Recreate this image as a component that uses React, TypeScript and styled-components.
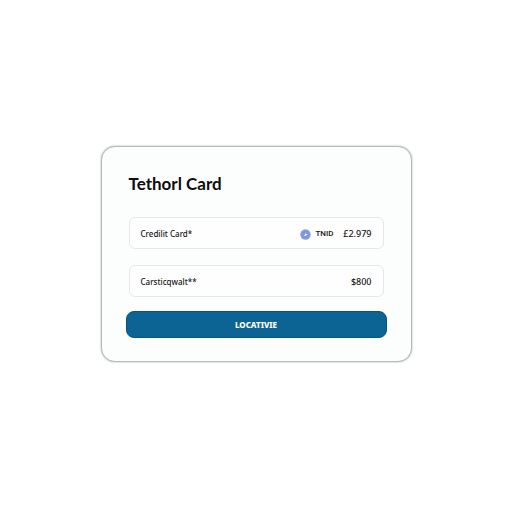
import React, { useState } from "react";
import styled, { createGlobalStyle } from "styled-components";

const GlobalStyle = createGlobalStyle`
  *, *::before, *::after { box-sizing: border-box; }
  body {
    margin: 0;
    background: #fff;
    color: #161719;
    font-family: "Noto Sans", sans-serif;
  }
`;

const Page = styled.main`
  display: flex;
  align-items: center;
  justify-content: center;
  min-height: 100vh;
  padding: 16px 16px 20px;
`;

const Card = styled.form`
  display: flex;
  flex-direction: column;
  width: 100%;
  max-width: 311px;
  padding: 26px 24px 23px;
  border: 1px solid #b4babc;
  border-radius: 14px;
  background: #fcfdfd;
  box-shadow: 0 0 2px rgba(100, 115, 120, 0.6);
`;

const Title = styled.h1`
  margin: 0 3px 22px;
  color: #0c0d0f;
  font-family: Lato, sans-serif;
  font-size: 17px;
  font-weight: 700;
  line-height: 22px;
`;

const Fields = styled.div`
  display: flex;
  flex-direction: column;
  gap: 16px;
  margin: 0 3px 14px;
`;

const Field = styled.div`
  display: flex;
  align-items: center;
  height: 32px;
  padding: 2px 11px 0;
  border: 1px solid #e6e8e8;
  border-radius: 6px;
  background: #fefefe;
`;

const Label = styled.label`
  flex: 1;
  font-size: 8px;
  font-weight: 500;
  line-height: 12px;
  white-space: nowrap;
`;

const Currency = styled.span`
  display: flex;
  align-items: center;
  gap: 4px;
  font-family: Roboto, sans-serif;
  font-size: 8px;
  font-weight: 500;
  line-height: 12px;
`;

const Amount = styled.input`
  width: 38px;
  padding: 0;
  border: 0;
  background: transparent;
  color: inherit;
  font-family: inherit;
  font-size: 9px;
  font-weight: 500;
  line-height: 12px;
  text-align: right;
`;

const Submit = styled.button`
  height: 27px;
  padding: 0;
  border: 1px solid #07547f;
  border-radius: 8px;
  background: #0b6494;
  color: #fff;
  font-family: inherit;
  font-size: 8px;
  font-weight: 800;
  line-height: 12px;
  cursor: pointer;
`;

function CoinIcon() {
  return (
    <svg width="11" height="11" viewBox="0 0 11 11" aria-hidden="true">
      <circle cx="5.5" cy="5.5" r="5.2" fill="#8b9bdc" />
      <circle cx="5.5" cy="5.5" r="3.5" fill="#7898df" />
      <path d="M5.8 3.2 V4.8 L7.6 5.2 L5.4 7 L3.5 6.4 L5 5.8 Z" fill="#f4f7ff" />
    </svg>
  );
}

export default function App() {
  const [credit, setCredit] = useState("£2.979");
  const [limit, setLimit] = useState("$800");

  return (
    <>
      <GlobalStyle />
      <Page>
        <Card onSubmit={(event) => event.preventDefault()}>
          <Title>Tethorl Card</Title>
          <Fields>
            <Field>
              <Label htmlFor="credit">Credilit Card*</Label>
              <Currency>
                <CoinIcon />
                TNID
              </Currency>
              <Amount id="credit" value={credit} onChange={(e) => setCredit(e.target.value)} />
            </Field>
            <Field>
              <Label htmlFor="limit">Carsticqwalt**</Label>
              <Amount id="limit" value={limit} onChange={(e) => setLimit(e.target.value)} />
            </Field>
          </Fields>
          <Submit type="submit">LOCATIVIE</Submit>
        </Card>
      </Page>
    </>
  );
}
